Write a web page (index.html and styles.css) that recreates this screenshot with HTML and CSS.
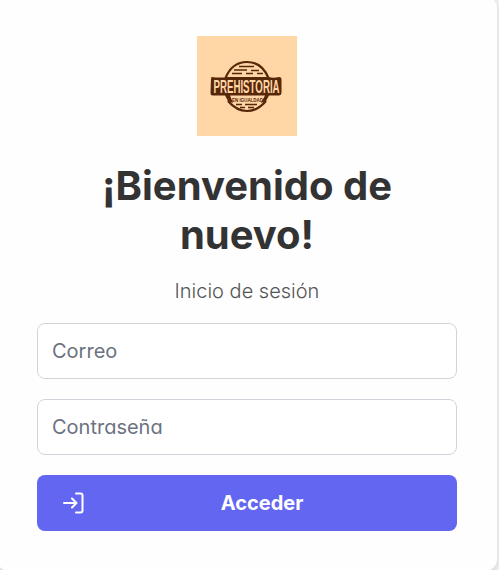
FILE: index.html
```html
<!DOCTYPE html>
<html lang="es">
<head>
<meta charset="utf-8">
<title>Prehistoria en Igualdad</title>
<link rel="stylesheet" href="styles.css">
</head>
<body>
<main class="card">
  <svg class="logo" viewBox="0 0 100 100" role="img" aria-label="Prehistoria en Igualdad">
    <rect width="100" height="100" fill="#ffd6a5"/>
    <g fill="none" stroke="#57270a">
      <path stroke-width="2.200" d="M28.500 42C33 31 41 26 50 26S67 31 71.500 42M31 65C37 72 43 75 50 75S63 72 69 65"/>
      <path stroke-width="1.300" d="M42 30.500H57M37 34H50M54 34.500H62M35 37.500H45M49 37.500H56M60 37.500H66M39 68.500H45M48 68.500H60M43 71.500H48M51 71.500H57"/>
    </g>
    <path fill="#57270a" d="M15 41Q14 41 14 43L13.500 57Q13.500 59.500 15.500 59.500H28L31 65L36 67L33 59.500H68L64 67L69 65L72 59.500H82Q84.500 59 84.500 57V43Q84.500 41 82 41Q76 42.500 72 41H31Q22 42 15 41Z"/>
    <text class="logo-name" text-anchor="middle" transform="translate(49.500 56.500) scale(.54 1)">PREHISTORIA</text>
    <text class="logo-tag" text-anchor="middle" transform="translate(50.500 65.500) scale(.75 1)">EN IGUALDAD</text>
  </svg>
  <h1 class="title">¡Bienvenido de nuevo!</h1>
  <p class="subtitle">Inicio de sesión</p>
  <form class="form">
    <input class="field" type="email" placeholder="Correo" aria-label="Correo">
    <input class="field" type="password" placeholder="Contraseña" aria-label="Contraseña">
    <button class="submit" type="button">
      <svg class="submit-icon" viewBox="0 0 24 24" aria-hidden="true"><path d="M2 12H14.500M10 7.500L14.500 12L10 16.500M14 2.500H18.500Q20.500 2.500 20.500 4.500V19.500Q20.500 21.500 18.500 21.500H14"/></svg>
      <span class="submit-label">Acceder</span>
    </button>
  </form>
</main>
</body>
</html>
```
FILE: styles.css
```css
* { box-sizing: border-box; }
body {
  margin: 0;
  height: 570px;
  overflow: hidden;
  background: #f0f0f0;
  font-family: Inter, "Liberation Sans", sans-serif;
  font-feature-settings: "cv02", "cv03", "cv04", "cv11";
}
.card {
  display: flex;
  flex-direction: column;
  align-items: center;
  width: 500px;
  margin: -4px 0 0 -3px;
  padding: 40px;
  border-radius: 12px;
  background: #fefefe;
  box-shadow: 0 4px 8px rgba(0, 0, 0, .1);
}
.logo { display: block; width: 100px; height: 100px; }
.logo-name {
  fill: #ffd6a5;
  font: 700 18px "Liberation Sans", sans-serif;
}
.logo-tag {
  fill: #57270a;
  font: 700 6px "Liberation Sans", sans-serif;
}
.title {
  margin: 25px 0 0;
  color: #333;
  font-size: 40px;
  font-weight: 700;
  line-height: 49px;
  text-align: center;
}
.subtitle {
  margin: 20px 0 0;
  color: #555;
  font-size: 20px;
  font-weight: 350;
  line-height: 24px;
}
.form {
  display: flex;
  flex-direction: column;
  gap: 20px;
  width: 100%;
  margin-top: 20px;
}
.field {
  width: 100%;
  height: 56px;
  padding: 0 14px;
  border: 1px solid #d1d5db;
  border-radius: 8px;
  background: #fff;
  color: #374151;
  font: inherit;
  font-feature-settings: inherit;
  font-size: 20px;
}
.field::placeholder { color: #6b7280; opacity: 1; }
.submit {
  display: flex;
  align-items: center;
  height: 56px;
  padding: 0 25px;
  border: 0;
  border-radius: 8px;
  background: #6366f1;
  color: #fff;
  font: inherit;
  font-feature-settings: inherit;
  font-size: 20px;
  font-weight: 700;
}
.submit-icon {
  width: 24px;
  height: 24px;
  fill: none;
  stroke: currentColor;
  stroke-width: 2;
  stroke-linecap: round;
  stroke-linejoin: round;
}
.submit-label { flex: 1; padding-left: 6px; text-align: center; }
```
